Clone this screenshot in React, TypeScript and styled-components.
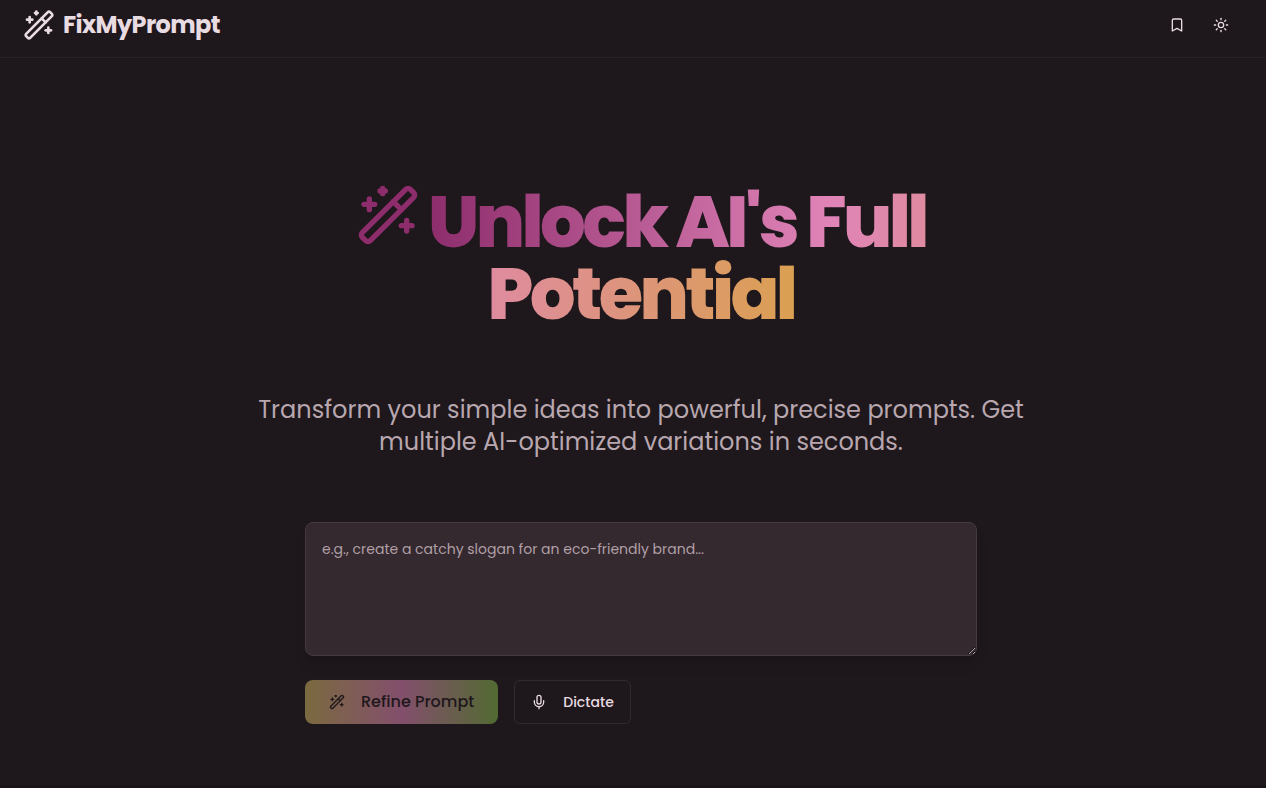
import { useState } from "react";
import styled, { createGlobalStyle } from "styled-components";
import { WandSparkles, Bookmark, Sun, Mic } from "lucide-react";

const GlobalStyle = createGlobalStyle`
  *, *::before, *::after { box-sizing: border-box; }
  body {
    margin: 0;
    background: #1e171b;
    color: #e9dbe2;
    font-family: Poppins, Inter, "Liberation Sans", sans-serif;
  }
  button, textarea { font: inherit; color: inherit; }
`;

const Page = styled.div`
  display: flex;
  flex-direction: column;
  min-height: 100vh;
`;

const Header = styled.header`
  display: flex;
  align-items: center;
  justify-content: space-between;
  padding: 5px 25px 12px 23px;
  border-bottom: 1px solid #272024;
`;

const Brand = styled.a`
  display: flex;
  align-items: center;
  gap: 8px;
  color: inherit;
  text-decoration: none;
  font-size: 24px;
  line-height: 32px;
  font-weight: 700;
  letter-spacing: -0.025em;
`;

const HeaderActions = styled.nav`
  display: flex;
  gap: 4px;
`;

const IconButton = styled.button`
  display: grid;
  place-items: center;
  width: 40px;
  height: 40px;
  padding: 0;
  border: 0;
  border-radius: 6px;
  background: transparent;
  cursor: pointer;
`;

const Hero = styled.main`
  flex: 1;
  display: flex;
  flex-direction: column;
  align-items: center;
  padding: 125px 16px 60px 32px;
  border-bottom: 3px solid #1a1317;
`;

const Title = styled.h1`
  max-width: 768px;
  margin: 0;
  font-size: 72px;
  line-height: 72px;
  font-weight: 800;
  letter-spacing: -0.05em;
  text-align: center;
`;

const TitleIcon = styled(WandSparkles)`
  margin-right: 8px;
  color: #8d2d6c;
`;

const GradientText = styled.span`
  background: linear-gradient(to right, #8d2d6c, #e084b8 50%, #dba052);
  background-clip: text;
  -webkit-background-clip: text;
  color: transparent;
`;

const Lead = styled.p`
  max-width: 768px;
  margin: 64px 0 0;
  color: #b8a7af;
  font-size: 24px;
  line-height: 32px;
  text-align: center;
`;

const PromptForm = styled.form`
  display: flex;
  flex-direction: column;
  gap: 24px;
  width: 100%;
  max-width: 672px;
  margin-top: 64px;
`;

const PromptInput = styled.textarea`
  display: block;
  width: 100%;
  height: 134px;
  padding: 16px;
  border: 1px solid #463a40;
  border-radius: 8px;
  background: #34292e;
  font-size: 14px;
  line-height: 20px;
  resize: vertical;
  box-shadow: 0 10px 15px -3px rgb(0 0 0 / 0.1), 0 4px 6px -4px rgb(0 0 0 / 0.1);

  &::placeholder { color: #b09fa7; opacity: 1; }
`;

const Actions = styled.div`
  display: flex;
  gap: 16px;
`;

const ActionButton = styled.button<{ $primary?: boolean }>`
  display: inline-flex;
  align-items: center;
  justify-content: center;
  gap: 16px;
  height: 44px;
  padding: 0 ${(p) => (p.$primary ? "24px" : "16px")};
  border: ${(p) => (p.$primary ? "0" : "1px solid #322a2e")};
  border-radius: ${(p) => (p.$primary ? "8px" : "6px")};
  background: ${(p) =>
    p.$primary ? "linear-gradient(to right, #7b6a40, #834f6c 50%, #526a32)" : "transparent"};
  color: ${(p) => (p.$primary ? "#1e171b" : "#e9dbe2")};
  font-size: ${(p) => (p.$primary ? "16px" : "14px")};
  line-height: 24px;
  font-weight: 500;
  cursor: pointer;
`;

export default function App() {
  const [prompt, setPrompt] = useState("");
  return (
    <>
      <GlobalStyle />
      <Page>
        <Header>
          <Brand href="#">
            <WandSparkles size={32} aria-hidden />
            FixMyPrompt
          </Brand>
          <HeaderActions aria-label="Tools">
            <IconButton type="button" aria-label="Saved prompts">
              <Bookmark size={16} />
            </IconButton>
            <IconButton type="button" aria-label="Switch theme">
              <Sun size={16} />
            </IconButton>
          </HeaderActions>
        </Header>
        <Hero>
          <Title>
            <TitleIcon size={64} aria-hidden />
            <GradientText>Unlock AI's Full Potential</GradientText>
          </Title>
          <Lead>
            Transform your simple ideas into powerful, precise prompts. Get multiple AI-optimized
            variations in seconds.
          </Lead>
          <PromptForm onSubmit={(e) => e.preventDefault()}>
            <PromptInput
              aria-label="Your prompt"
              placeholder="e.g., create a catchy slogan for an eco-friendly brand..."
              value={prompt}
              onChange={(e) => setPrompt(e.target.value)}
            />
            <Actions>
              <ActionButton type="submit" $primary>
                <WandSparkles size={16} aria-hidden />
                Refine Prompt
              </ActionButton>
              <ActionButton type="button">
                <Mic size={16} aria-hidden />
                Dictate
              </ActionButton>
            </Actions>
          </PromptForm>
        </Hero>
      </Page>
    </>
  );
}
